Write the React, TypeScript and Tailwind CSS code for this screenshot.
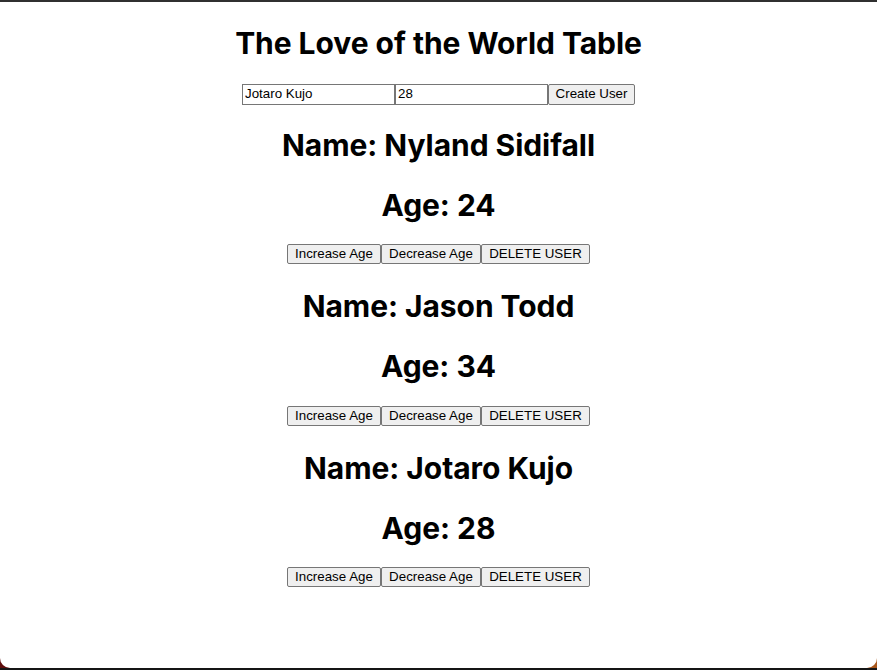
import React from "react";

const users = [
  { name: "Nyland Sidifall", age: 24 },
  { name: "Jason Todd", age: 34 },
  { name: "Jotaro Kujo", age: 28 },
];

const btn =
  "h-[20px] px-[6px] bg-[#efefef] border border-[#767676] rounded-[2px] text-[13.33px] leading-[16px] text-black [font-family:'Liberation_Sans',Arial,sans-serif]";

export default function App() {
  return (
    <div className="h-[670px] w-full bg-[linear-gradient(to_right,#5e0c0c,#7a2a10,#a8561a)] border-t-2 border-[#303030] border-b-2 border-b-[#151515] overflow-hidden">
      <div className="h-[666px] bg-white rounded-b-[10px] flex flex-col items-center text-black [font-family:Inter,'Noto_Sans',sans-serif]">
        <h1 className="mt-[21.5px] mb-[21px] text-[30px] leading-[39px] font-bold tracking-[-0.05px]">
          The Love of the World Table
        </h1>
        <div className="flex h-[21px]">
          <input
            defaultValue="Jotaro Kujo"
            className="w-[153px] h-[21px] px-[2px] pb-[1px] border border-[#767676] text-[13.33px] [font-family:'Liberation_Sans',Arial,sans-serif] outline-none"
          />
          <input
            defaultValue="28"
            className="w-[153px] h-[21px] px-[2px] pb-[1px] border border-[#767676] text-[13.33px] [font-family:'Liberation_Sans',Arial,sans-serif] outline-none"
          />
          <button className={btn + " h-[21px] w-[87px]"}>Create User</button>
        </div>
        <div className="mt-[21px] flex flex-col items-center">
          {users.map((u) => (
            <div key={u.name} className="flex flex-col items-center mb-[23px]">
              <h1 className="m-0 mb-[21px] text-[30px] leading-[39px] font-bold tracking-[-0.05px]">Name: {u.name}</h1>
              <h1 className="m-0 mb-[19.5px] text-[30px] leading-[39px] font-bold tracking-[-0.05px]">Age: {u.age}</h1>
              <div className="flex">
                <button className={btn + " w-[94px]"}>Increase Age</button>
                <button className={btn + " w-[100px]"}>Decrease Age</button>
                <button className={btn + " w-[109px]"}>DELETE USER</button>
              </div>
            </div>
          ))}
        </div>
      </div>
    </div>
  );
}
